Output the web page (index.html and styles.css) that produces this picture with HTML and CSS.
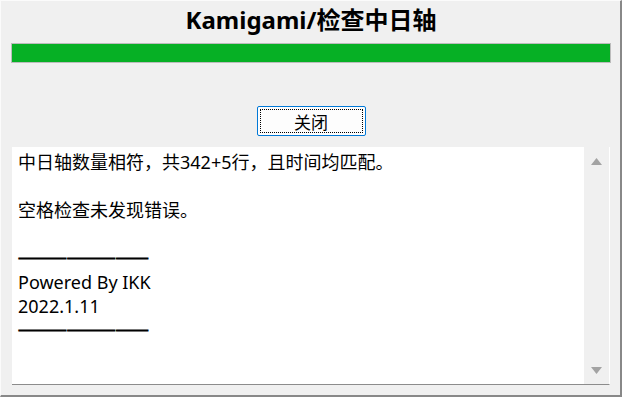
FILE: index.html
```html
<!DOCTYPE html>
<html lang="zh-CN">
<head>
  <meta charset="utf-8">
  <title>Kamigami/检查中日轴</title>
  <link rel="stylesheet" href="styles.css">
</head>
<body>
  <div class="window">
    <h1 class="title">Kamigami/检查中日轴</h1>
    <div class="progress"><div class="progress-fill" style="width: 100%;"></div></div>
    <button class="btn-close"><span class="btn-focus">关闭</span></button>
    <div class="log-box">
      <div class="log-text">
        <div class="line">中日轴数量相符，共342+5行，且时间均匹配。</div>
        <div class="line"></div>
        <div class="line">空格检查未发现错误。</div>
        <div class="line"></div>
        <div class="line rule"><span class="rule-text">————————</span></div>
        <div class="line">Powered By IKK</div>
        <div class="line">2022.1.11</div>
        <div class="line rule"><span class="rule-text">————————</span></div>
      </div>
      <div class="scrollbar">
        <svg class="arrow" width="11" height="7" viewBox="0 0 11 7"><polygon points="5.5,0 11,7 0,7" fill="#a3a3a3"/></svg>
        <svg class="arrow" width="11" height="7" viewBox="0 0 11 7"><polygon points="0,0 11,0 5.5,7" fill="#a3a3a3"/></svg>
      </div>
    </div>
  </div>
</body>
</html>
```

FILE: styles.css
```css
html, body {
  margin: 0;
  padding: 0;
  background: #f0f0f0;
}

.window {
  width: 622px;
  height: 397px;
  box-sizing: border-box;
  background: #f0f0f0;
  border-top: 1px solid #fbfbfb;
  border-left: 1px solid #fbfbfb;
  border-right: 2px solid #888;
  border-bottom: 2px solid #888;
  padding: 0 9px 10px 10px;
  display: flex;
  flex-direction: column;
  font-family: "Noto Sans", "Noto Sans CJK SC", sans-serif;
  color: #000;
}

.title {
  margin: 0;
  height: 42px;
  line-height: 38px;
  font-size: 24px;
  font-weight: bold;
  text-align: center;
}

.progress {
  height: 20px;
  box-sizing: border-box;
  border: 1px solid #bcbcbc;
  background: #e6e6e6;
}

.progress-fill {
  height: 100%;
  background: #06b025;
}

.btn-close {
  align-self: center;
  margin-top: 43px;
  width: 109px;
  height: 30px;
  box-sizing: border-box;
  padding: 2px;
  border: 1px solid #0078d7;
  border-radius: 2px;
  background: #fdfdfd;
  font-family: "Noto Sans CJK SC", sans-serif;
  font-size: 17px;
  color: #000;
  display: flex;
}

.btn-focus {
  flex: 1;
  border: 1px dotted #000;
  display: flex;
  align-items: center;
  justify-content: center;
}

.log-box {
  flex: 1;
  margin: 11px 1px 0 1px;
  background: #fff;
  border-bottom: 1px solid #8c8c8c;
  border-right: 1px solid #fff;
  display: flex;
}

.log-text {
  flex: 1;
  padding: 3px 6px;
  font-size: 18px;
}

.line {
  height: 24px;
  line-height: 24px;
  white-space: nowrap;
}

.rule {
  font-family: "Noto Sans CJK SC", sans-serif;
  font-size: 16px;
  line-height: 20px;
}

.rule-text {
  display: inline-block;
  -webkit-text-stroke: 1px #000;
  transform: scaleX(1.24);
  transform-origin: left center;
}

.scrollbar {
  width: 25px;
  background: #f0f0f0;
  display: flex;
  flex-direction: column;
  justify-content: space-between;
  align-items: center;
  padding: 11px 0 10px;
}
```
